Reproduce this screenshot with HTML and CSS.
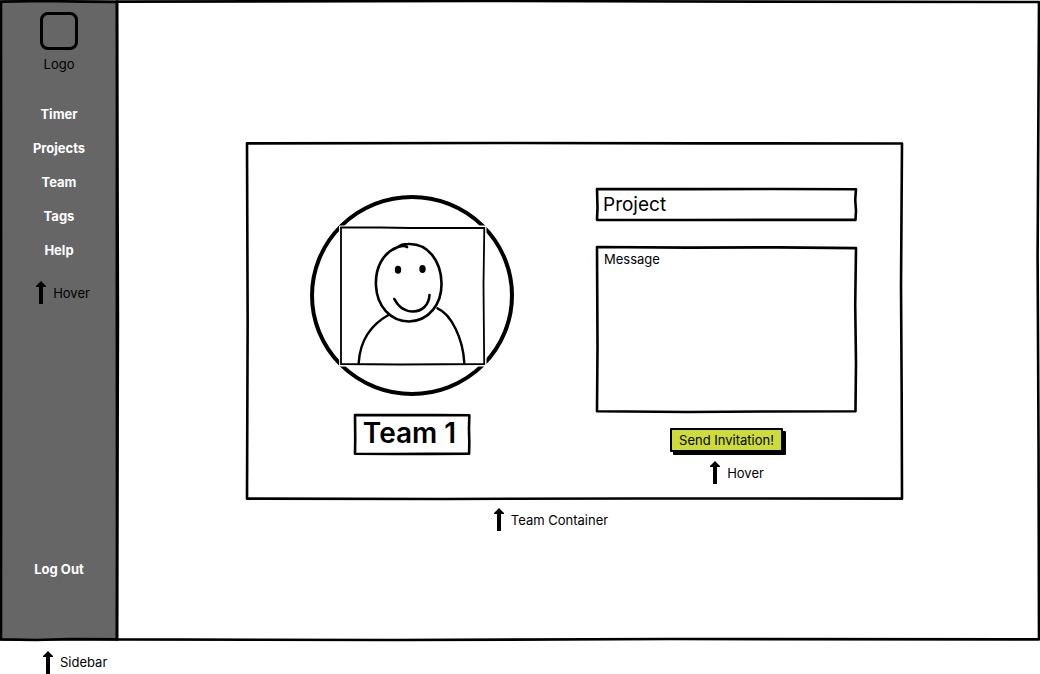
FILE: index.html
```html
<!DOCTYPE html>
<html lang="en">
<head>
<meta charset="utf-8">
<meta name="viewport" content="width=device-width, initial-scale=1">
<title>Team</title>
<link rel="stylesheet" href="styles.css">
</head>
<body>
<svg class="defs" aria-hidden="true">
  <symbol id="arrow" viewBox="0 0 12 23"><path d="M6 0 11 5V6H8V23H4V6H1V5Z"/></symbol>
  <symbol id="sketch" viewBox="0 0 100 100" preserveAspectRatio="none">
    <path d="M0 0 35 .4 70 .2 100 .7 99.700 35 100 70 99.800 99.500 65 99.700 35 100 0 99.500 .2 60Z" fill="none" stroke="#000" stroke-width="2.600" stroke-linejoin="round" vector-effect="non-scaling-stroke"/>
  </symbol>
  <symbol id="sketch-large" viewBox="0 0 100 100" preserveAspectRatio="none">
    <path d="M0 .1 40 0 70 .1 100 .15 99.850 40 99.950 70 100 99.900 60 99.850 30 100 0 99.900 .1 50Z" fill="none" stroke="#000" stroke-width="2.600" stroke-linejoin="round" vector-effect="non-scaling-stroke"/>
  </symbol>
</svg>
<div class="window">
  <aside class="sidebar">
    <svg class="outline" aria-hidden="true"><use href="#sketch-large"/></svg>
    <div class="logo"><span class="logo-mark"></span>Logo</div>
    <nav class="nav">
      <a href="#">Timer</a>
      <a href="#">Projects</a>
      <a href="#">Team</a>
      <a href="#">Tags</a>
      <a href="#">Help</a>
    </nav>
    <p class="note"><svg class="arrow" aria-hidden="true"><use href="#arrow"/></svg>Hover</p>
    <a class="logout" href="#">Log Out</a>
  </aside>
  <main class="content">
    <svg class="outline" aria-hidden="true"><use href="#sketch-large"/></svg>
    <section class="panel">
      <svg class="outline" aria-hidden="true"><use href="#sketch-large"/></svg>
      <div class="team">
        <svg class="avatar" viewBox="310 195 204 201" role="img" aria-label="Team picture">
          <g fill="none" stroke="#000" stroke-linecap="round">
            <ellipse cx="412" cy="295.5" rx="100" ry="98.5" stroke-width="4"/>
            <path d="M340 226H486V366H340Z" fill="#fff" stroke="#fff" stroke-width="1"/>
            <path d="M341 227.3 380 227.5 410 228H484.300L483.500 285 484.200 364 400 364.500 341 364Z" stroke-width="1.800"/>
            <path d="M407 247C405 245 401 246 398 247C382 253 375 269 376 286C377 306 390 321 409 321.500C429 321 442 304 441.500 283C441 261 428 243 408 244C403 244 400 245 398 247" stroke-width="2.600"/>
            <path d="M394.300 299C398 306 404 311.500 413 311.500C422 311.500 429 305 429.500 295" stroke-width="2.600"/>
            <path d="M389.300 314.500C372 324 360 340 358.700 363" stroke-width="2.400"/>
            <path d="M437.500 308.300C451 314 463 338 464.300 363" stroke-width="2.400"/>
          </g>
          <ellipse cx="398" cy="269.700" rx="3.200" ry="4"/>
          <ellipse cx="422.500" cy="269" rx="3.200" ry="4"/>
        </svg>
        <h1 class="team-name"><svg class="outline" aria-hidden="true"><use href="#sketch"/></svg>Team 1</h1>
      </div>
      <form class="invite">
        <div class="field">
          <svg class="outline" aria-hidden="true"><use href="#sketch"/></svg>
          <input class="project" type="text" aria-label="Project" value="Project">
        </div>
        <div class="field">
          <svg class="outline" aria-hidden="true"><use href="#sketch"/></svg>
          <textarea class="message" aria-label="Message">Message</textarea>
        </div>
        <button class="send" type="button">Send Invitation!</button>
        <p class="note"><svg class="arrow" aria-hidden="true"><use href="#arrow"/></svg>Hover</p>
      </form>
    </section>
    <p class="note panel-note"><svg class="arrow" aria-hidden="true"><use href="#arrow"/></svg>Team Container</p>
  </main>
</div>
<p class="note sidebar-note"><svg class="arrow" aria-hidden="true"><use href="#arrow"/></svg>Sidebar</p>
</body>
</html>
```
FILE: styles.css
```css
* { box-sizing: border-box; }
body {
  margin: 0;
  min-height: 100vh;
  display: flex;
  flex-direction: column;
  overflow: hidden;
  background: #fff;
  color: #000;
  font: 13px/20px Inter, "Open Sans", sans-serif;
}
p, h1 { margin: 0; }
a { color: #fff; text-decoration: none; }
.defs { position: absolute; width: 0; height: 0; }
.window { flex: 1; display: flex; }
.sidebar, .content, .panel, .team-name, .field { position: relative; }
.outline {
  position: absolute;
  inset: 1px;
  width: calc(100% - 2px);
  height: calc(100% - 2px);
  overflow: visible;
  pointer-events: none;
}
.outline use { width: 100%; height: 100%; }
#sketch, #sketch-large { overflow: visible; }
.sidebar {
  width: 118px;
  flex: none;
  display: flex;
  flex-direction: column;
  align-items: center;
  padding: 12px 0 62px;
  background: #666;
}
.logo { display: flex; flex-direction: column; align-items: center; gap: 4px; }
.logo-mark { width: 38px; height: 38px; border: 3px solid #000; border-radius: 8px; }
.nav {
  display: flex;
  flex-direction: column;
  align-items: center;
  gap: 14px;
  margin: 30px 0 21px;
}
.nav a, .logout { font-weight: 700; }
.logout { margin-top: auto; }
.note { display: flex; align-items: center; gap: 6px; }
.arrow { width: 12px; height: 23px; flex: none; }
.sidebar .note { margin-left: 7px; }
.content { flex: 1; margin-left: -2px; padding: 142px 137px 0 130px; }
.panel {
  display: flex;
  justify-content: space-between;
  padding: 46px 46px 16px 64px;
}
.team { display: flex; flex-direction: column; align-items: center; gap: 18px; padding-top: 7px; }
.avatar { width: 204px; height: 201px; }
.team-name {
  padding: 1px 14px 3px 9px;
  font-size: 28px;
  font-weight: 600;
  line-height: 37px;
}
.invite { width: 261px; display: flex; flex-direction: column; align-items: center; }
.field { display: flex; width: 100%; margin-bottom: 25px; }
.project, .message {
  width: 100%;
  border: 0;
  padding: 0 7px;
  background: transparent;
  color: inherit;
  font: inherit;
  outline: 0;
}
.project { height: 33px; font-size: 19px; }
.message { height: 167px; padding: 3px 8px; resize: none; }
.field + .field { margin-bottom: 15px; }
.send {
  padding: 0 7px;
  border: 2px solid #000;
  border-radius: 1px;
  background: #cddc39;
  box-shadow: 3px 3px 0 #000;
  color: #000;
  font: inherit;
  line-height: 20px;
  margin-bottom: 9px;
}
.invite .note { margin-left: 20px; }
.panel-note { justify-content: center; margin-top: 8px; margin-right: 48px; }
.sidebar-note { padding: 9px 0 0 42px; height: 33px; }
```
